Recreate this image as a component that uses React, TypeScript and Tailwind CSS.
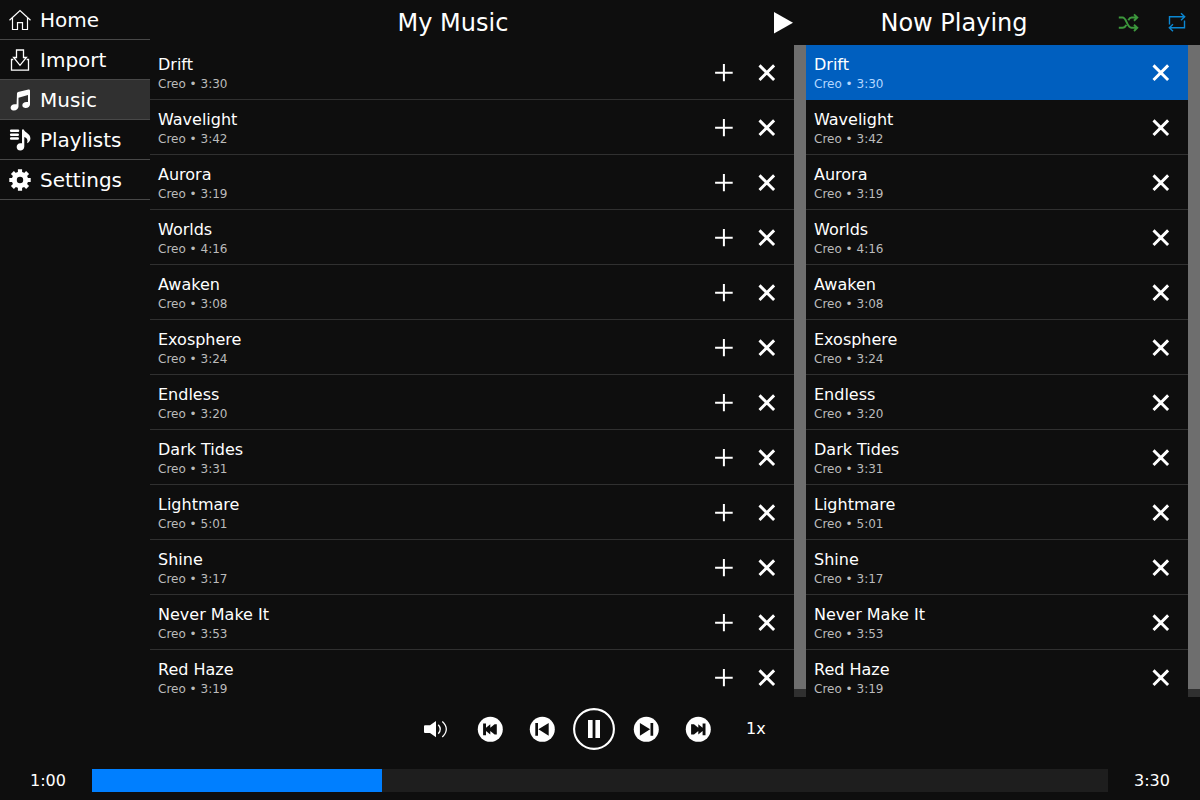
import type { ReactNode } from 'react';

interface Track {
  title: string;
  artist: string;
  length: string;
}

const tracks: Track[] = [
  ['Drift', '3:30'],
  ['Wavelight', '3:42'],
  ['Aurora', '3:19'],
  ['Worlds', '4:16'],
  ['Awaken', '3:08'],
  ['Exosphere', '3:24'],
  ['Endless', '3:20'],
  ['Dark Tides', '3:31'],
  ['Lightmare', '5:01'],
  ['Shine', '3:17'],
  ['Never Make It', '3:53'],
  ['Red Haze', '3:19'],
].map(([title, length]) => ({ title, artist: 'Creo', length }));

function Icon({ children }: { children: ReactNode }) {
  return (
    <svg width="24" height="24" viewBox="0 0 24 24" className="shrink-0" fill="none">
      {children}
    </svg>
  );
}

const HomeIcon = () => (
  <Icon>
    <path d="M1.500 12.300 12 2.600l10.500 9.700M4.500 10v11.500h5v-6.900h5v6.900h5V10" stroke="#fff" strokeWidth="1.200" />
  </Icon>
);

const ImportIcon = () => (
  <Icon>
    <path d="M8.500 2v7.500H5.600L12 17.300l6.400-7.800h-2.900V2zM5.300 11.500H3.500v10.700h17V11.500h-1.800" stroke="#fff" strokeWidth="1.300" />
  </Icon>
);

const MusicIcon = () => (
  <Icon>
    <path d="M9 5.200Q9.300 4.300 10 4L20.500 1.500Q22 1.200 22 2.800V16.500C22 18.600 19.800 20.300 17.200 20C13.200 19.500 13.200 14.200 18.500 14H20V7L10.500 9.700V18.500C10.500 20.600 8.300 22.700 5.500 22.500C1.500 22.200 1.500 16.500 6.700 16.200H8.600z" fill="#fff" />
  </Icon>
);

const PlaylistIcon = () => (
  <Icon>
    <path d="M3.100 2.700h7M3.100 6.700h6.700M3.100 10.500h6.700" stroke="#fff" strokeWidth="2.400" strokeLinecap="round" />
    <path d="M14 1.500h1.800C16.400 4.500 22.400 5.300 22.400 10.500C22.400 12.700 21 14.300 19 15.300C20 12.500 19.500 10 16.300 9V18.500C16.300 21 14.400 22.600 12.300 22.600C7.500 22.600 7.500 15.300 12.300 15.300H14z" fill="#fff" />
  </Icon>
);

const GearIcon = () => (
  <Icon>
    <circle cx="12" cy="12" r="5.700" stroke="#fff" strokeWidth="5" />
    <path d="M12 1.300v4M12 18.700v4M1.300 12h4M18.700 12h4M4.400 4.400l3 3M16.600 16.600l3 3M4.400 19.600l3-3M16.600 7.400l3-3" stroke="#fff" strokeWidth="4.200" />
  </Icon>
);

const nav = [
  { label: 'Home', icon: <HomeIcon /> },
  { label: 'Import', icon: <ImportIcon /> },
  { label: 'Music', icon: <MusicIcon />, active: true },
  { label: 'Playlists', icon: <PlaylistIcon /> },
  { label: 'Settings', icon: <GearIcon /> },
];

function Plus() {
  return (
    <svg width="20" height="20" viewBox="0 0 20 20" aria-label="Add">
      <path d="M1.100 9.700h17.600M9.900 1v17.300" stroke="#fff" strokeWidth="2" />
    </svg>
  );
}

function Cross() {
  return (
    <svg width="20" height="20" viewBox="0 0 20 20" aria-label="Remove">
      <path d="M2.500 2.400 17.100 17M17.100 2.400 2.500 17" stroke="#fff" strokeWidth="2.900" />
    </svg>
  );
}

function TrackList({ library = false }: { library?: boolean }) {
  return (
    <div className="flex h-[652px] overflow-hidden">
      <div className="min-w-0 flex-1">
        {tracks.map((track, i) => {
          const current = !library && i === 0;
          return (
            <div
              key={track.title}
              className={`flex h-[55px] items-start border-b pl-2 ${
                current ? 'border-[#005fbf] bg-[#005fbf]' : 'border-[#303030]'
              }`}
            >
              <div className="flex-1 pt-[10px]">
                <div className="text-base leading-5">{track.title}</div>
                <div className={`text-xs leading-[19px] ${current ? 'text-[#b3d7ff]' : 'text-[#bbb]'}`}>
                  {track.artist} • {track.length}
                </div>
              </div>
              <div className="flex gap-[23px] pt-[18px] pr-[17px]">
                {library && <Plus />}
                <Cross />
              </div>
            </div>
          );
        })}
      </div>
      <div className="w-3 shrink-0 bg-[#303030]">
        <div className="h-[644px] bg-[#6e6e6e]" />
      </div>
    </div>
  );
}

function RoundButton({ d }: { d: string }) {
  return (
    <svg width="26" height="26" viewBox="0 0 26 26">
      <circle cx="13.300" cy="13.300" r="12.500" fill="#fff" />
      <path d={d} fill="#0e0e0e" />
    </svg>
  );
}

function Controls() {
  return (
    <div className="flex h-16 items-center pl-[423px]">
      <svg width="26" height="26" viewBox="0 0 26 26" fill="none">
        <path d="M2 9.300h5L13 5v16.200l-6-4.300H2q-1 0-1-1v-5.600q0-1 1-1z" fill="#fff" />
        <path d="M15.300 8.700q4 4.500 0 9M19.300 5.500q8 7.500 0 15.500" stroke="#fff" strokeWidth="1.300" />
      </svg>
      <div className="flex items-center pl-7">
        <RoundButton d="M6.100 7.500H9v4.200l4.300-3.500v3.500l4.300-3.500h2.200v10.200h-2.200l-4.300-3.500v3.500L9 14.900v4.300H6.100z" />
        <div className="w-[26px]" />
        <RoundButton d="M6.300 7H9v12.700H6.300zM9.400 13.300 19.700 7v12.700z" />
        <div className="w-[17px]" />
        <svg width="44" height="44" viewBox="0 0 44 44">
          <circle cx="22" cy="22" r="19.900" fill="none" stroke="#fff" strokeWidth="2.100" />
          <path d="M16 13h4.600v18H16zM23.400 13H28v18h-4.600z" fill="#fff" />
        </svg>
        <div className="w-[17px]" />
        <RoundButton d="M20.200 7h-2.700v12.700h2.700zM17.100 13.300 6.900 7v12.700z" />
        <div className="w-[26px]" />
        <RoundButton d="M20.500 7.500h-2.900v4.200l-4.300-3.500v3.500L9 8.200H6.100v10.200H9l4.300-3.500v3.500l4.300-3.500v4.300h2.900z" />
        <span className="pl-[35px] text-base">1x</span>
      </div>
    </div>
  );
}

export default function App() {
  return (
    <div className="flex h-[800px] w-[1200px] flex-col overflow-hidden bg-[#0e0e0e] font-['DejaVu_Sans',sans-serif] text-white">
      <div className="flex h-[697px]">
        <nav className="w-[150px] shrink-0">
          {nav.map(({ label, icon, active }) => (
            <div
              key={label}
              className={`flex h-10 items-center gap-2 border-b border-[#484848] pl-2 text-xl ${active ? 'bg-[#303030]' : ''}`}
            >
              {icon}
              <span>{label}</span>
            </div>
          ))}
        </nav>
        <section className="w-[656px] shrink-0">
          <header className="flex h-[45px] items-center">
            <h1 className="w-[606px] text-center text-2xl">My Music</h1>
            <svg width="40" height="40" viewBox="0 0 40 40">
              <path d="M18 9v21.500L37 19.700z" fill="#fff" />
            </svg>
          </header>
          <TrackList library />
        </section>
        <section className="flex-1">
          <header className="flex h-[45px] items-center">
            <h1 className="w-[296px] text-center text-2xl">Now Playing</h1>
            <div className="flex gap-[25px] pl-[14px]">
              <svg width="24" height="24" viewBox="0 0 24 24" fill="none" stroke="#3c973c" strokeWidth="1.900">
                <path d="M2.800 6.500h3.700C11 6.500 10.500 16.800 15.500 16.800H21M2.800 16.800h3.700c2 0 3-1.300 3.800-3M12.300 9.200c.8-1.500 1.500-2.700 3.200-2.700H21M18 3.400l3.300 3.100L18 9.700M18 13.700l3.300 3.100-3.300 3.200" />
              </svg>
              <svg width="24" height="24" viewBox="0 0 24 24" fill="none" stroke="#0b87d2" strokeWidth="1.400">
                <path d="M4.500 13.500v-7.800h15M16 2.200l3.700 3.500L16 9.200M19.500 9.500v7.300h-15M8 13.300l-3.700 3.500L8 20.300" />
              </svg>
            </div>
          </header>
          <TrackList />
        </section>
      </div>
      <Controls />
      <div className="flex h-[39px] items-center text-base">
        <span className="w-[92px] pl-[30px]">1:00</span>
        <div className="h-[23px] w-[1016px] bg-[#1e1e1e]">
          <div className="h-full w-[290px] bg-[#007fff]" />
        </div>
        <span className="pl-[26px]">3:30</span>
      </div>
    </div>
  );
}
